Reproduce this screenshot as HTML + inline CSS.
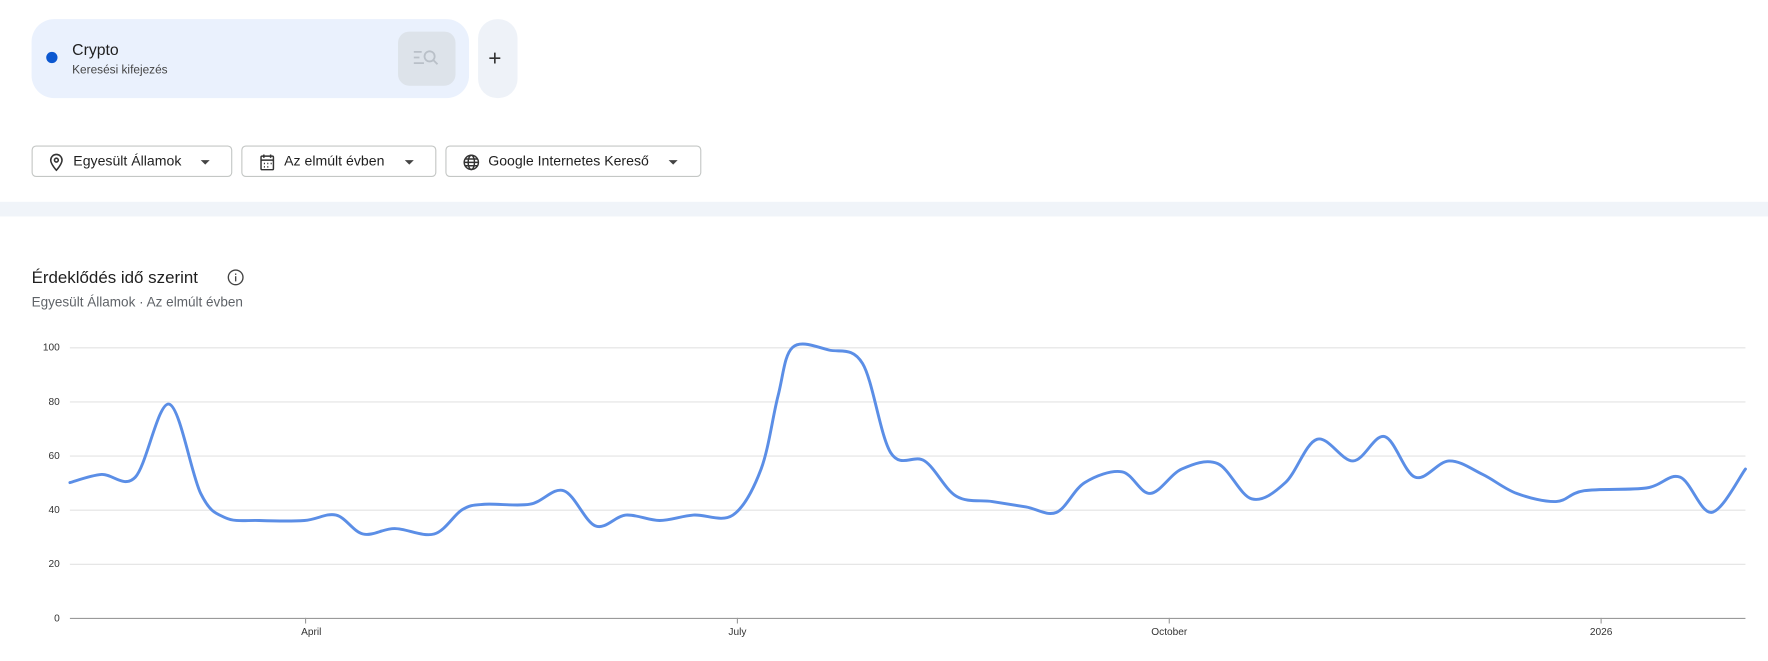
<!DOCTYPE html>
<html><head><meta charset="utf-8"><style>
html,body{margin:0;padding:0;background:#fff;overflow:hidden}
body{width:1768px;height:661px}
#w{width:1568px;height:586px;transform:scale(1.12755);transform-origin:0 0;position:relative;font-family:"Liberation Sans",sans-serif;color:#1f1f1f}
.a{position:absolute}
.dd{position:absolute;top:129px;height:28px;border:1px solid #c4c7c5;border-radius:4px;font-size:12.5px;line-height:27px;box-sizing:border-box;color:#1f1f1f}
.dd svg{position:absolute;top:6px}
.tri{position:absolute;top:12px;width:0;height:0;border-left:4px solid transparent;border-right:4px solid transparent;border-top:4px solid #444}
</style></head><body><div id="w">
<div class="a" style="left:28px;top:17px;width:388px;height:70px;background:#eaf1fd;border-radius:20px"></div>
<div class="a" style="left:41px;top:46px;width:10px;height:10px;border-radius:50%;background:#0b57d0"></div>
<div class="a" style="left:64px;top:36px;font-size:14px">Crypto</div>
<div class="a" style="left:64px;top:56px;font-size:10.5px;color:#444">Keresési kifejezés</div>
<div class="a" style="left:353px;top:28px;width:51px;height:48px;background:#dde3ea;border-radius:10px"></div>
<svg class="a" style="left:366px;top:42px" width="26" height="20" viewBox="0 0 26 20" fill="none" stroke="#b9c0c8" stroke-width="1.6"><path d="M1 4h7M1 9h5M1 14h9"/><circle cx="15" cy="8" r="4.5"/><path d="M18 11l4 4"/></svg>
<div class="a" style="left:424px;top:17px;width:35px;height:70px;background:#eef2f8;border-radius:17px"></div>
<div class="a" style="left:433px;top:41px;font-size:20px;color:#333">+</div>

<div class="dd" style="left:28px;width:178px"><svg style="left:14px" width="14" height="16" viewBox="0 0 14 16" fill="none" stroke="#333" stroke-width="1.4"><path d="M7 15s5-5.5 5-9a5 5 0 0 0-10 0c0 3.5 5 9 5 9z"/><circle cx="7" cy="6" r="1.7"/></svg><span style="position:absolute;left:36px">Egyesült Államok</span><div class="tri" style="left:149px"></div></div>
<div class="dd" style="left:214px;width:173px"><svg style="left:15px" width="14" height="16" viewBox="0 0 14 16" fill="none" stroke="#333" stroke-width="1.3"><rect x="1.5" y="2.5" width="11" height="12" rx="1"/><path d="M1.5 6h11M4 1v3M10 1v3M4 9h1M7 9h1M10 9h1M4 12h1M7 12h1"/></svg><span style="position:absolute;left:37px">Az elmúlt évben</span><div class="tri" style="left:144px"></div></div>
<div class="dd" style="left:395px;width:227px"><svg style="left:14px" width="16" height="16" viewBox="0 0 16 16" fill="none" stroke="#333" stroke-width="1.3"><circle cx="8" cy="8" r="6.3"/><ellipse cx="8" cy="8" rx="2.8" ry="6.3"/><path d="M1.7 8h12.6M2.5 5h11M2.5 11h11"/></svg><span style="position:absolute;left:37px">Google Internetes Kereső</span><div class="tri" style="left:197px"></div></div>

<div class="a" style="left:0;top:179px;width:1568px;height:13px;background:#f0f4f9"></div>
<div class="a" style="left:28px;top:238px;font-size:15px;color:#1f1f1f">Érdeklődés idő szerint</div>
<svg class="a" style="left:201px;top:238px" width="16" height="16" viewBox="0 0 16 16" fill="none" stroke="#444" stroke-width="1.2"><circle cx="8" cy="8" r="6.5"/><path d="M8 7v4.5M8 4.6v1.2"/></svg>
<div class="a" style="left:28px;top:261px;font-size:12px;color:#5f6368">Egyesült Államok · Az elmúlt évben</div>

<svg class="a" style="left:0;top:0" width="1568" height="586" viewBox="0 0 1568 586">
<g stroke="#e3e3e3" stroke-width="1"><path d="M62 308.5H1548M62 356.5H1548M62 404.5H1548M62 452.5H1548M62 500.5H1548"/></g>
<path d="M62 548.5H1548" stroke="#9a9a9a"/>
<g stroke="#9a9a9a"><path d="M271 548v5M654 548v5M1037 548v5M1420 548v5"/></g>
<g font-size="9" fill="#333" text-anchor="end" font-family="Liberation Sans,sans-serif"><text x="53" y="311">100</text><text x="53" y="359">80</text><text x="53" y="407">60</text><text x="53" y="455">40</text><text x="53" y="503">20</text><text x="53" y="551">0</text></g>
<g font-size="9" fill="#333" text-anchor="middle" font-family="Liberation Sans,sans-serif"><text x="276" y="563">April</text><text x="654" y="563">July</text><text x="1037" y="563">October</text><text x="1420" y="563">2026</text></g>
<path id="ln" fill="none" stroke="#5b8ee6" stroke-width="2.6" stroke-linejoin="round" stroke-linecap="round"/>
</svg>
</div>
<script>
var d=[[62,50],[90,53],[120,52],[150,79],[178,46],[200,37],[230,36],[270,36],[298,38],[322,31],[350,33],[385,31],[410,40],[430,42],[470,42],[500,47],[528,34],[555,38],[585,36],[615,38],[650,38],[675,55],[690,82],[703,100],[735,99],[765,94],[790,61],[820,58],[848,45],[880,43],[910,41],[937,39],[962,50],[995,54],[1020,46],[1048,55],[1080,57],[1110,44],[1140,50],[1168,66],[1200,58],[1228,67],[1255,52],[1285,58],[1315,53],[1345,46],[1380,43],[1405,47],[1460,48],[1490,52],[1518,39],[1548,55]];
var p=d.map(function(a){return [a[0],548-a[1]*2.4]});
var s="M"+p[0][0]+" "+p[0][1];
for(var i=0;i<p.length-1;i++){var a=p[i-1]||p[i],b=p[i],c=p[i+1],e=p[i+2]||c;
s+=" C"+(b[0]+(c[0]-a[0])/6)+" "+(b[1]+(c[1]-a[1])/6)+" "+(c[0]-(e[0]-b[0])/6)+" "+(c[1]-(e[1]-b[1])/6)+" "+c[0]+" "+c[1];}
document.getElementById("ln").setAttribute("d",s);
</script>
</body></html>
